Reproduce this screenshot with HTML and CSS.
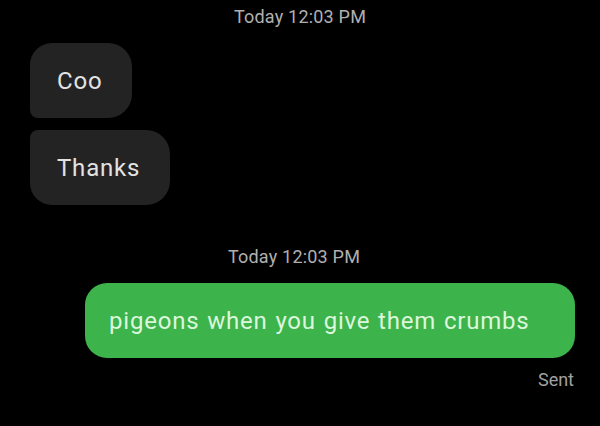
FILE: index.html
```html
<!DOCTYPE html>
<html>
<head>
<meta charset="utf-8">
<link rel="stylesheet" href="styles.css">
</head>
<body>
<div class="chat">
  <div class="time time-top">Today 12:03 PM</div>
  <div class="received">
    <div class="bubble in first">Coo</div>
    <div class="bubble in last">Thanks</div>
  </div>
  <div class="time time-mid">Today 12:03 PM</div>
  <div class="bubble out">pigeons when you give them crumbs</div>
  <div class="status">Sent</div>
</div>
</body>
</html>
```
FILE: styles.css
```css
html, body {
  margin: 0;
  padding: 0;
  background: #000;
  width: 600px;
  height: 426px;
  overflow: hidden;
}
.chat {
  display: flex;
  flex-direction: column;
  font-family: Roboto, "Noto Sans", sans-serif;
}
.time {
  align-self: center;
  color: #b0b0b0;
  font-size: 18px;
  line-height: 22px;
  letter-spacing: 0.2px;
}
.time-top {
  margin-top: 6px;
}
.received {
  display: flex;
  flex-direction: column;
  align-items: flex-start;
  gap: 12px;
  margin: 15px 0 0 30px;
}
.bubble {
  font-size: 24px;
  line-height: 28px;
  letter-spacing: 0.8px;
  word-spacing: 1px;
  display: flex;
  align-items: center;
  box-sizing: border-box;
  height: 75px;
}
.bubble.in {
  background: #232323;
  color: #e2e2e2;
  padding: 0 30px 0 27px;
}
.bubble.first {
  border-radius: 22px 24px 24px 8px;
}
.bubble.last {
  border-radius: 8px 24px 24px 22px;
}
.time-mid {
  margin-top: 41px;
  margin-left: -12px;
}
.bubble.out {
  margin: 15px 25px 0 85px;
  background: #3db34b;
  color: #dcf7dc;
  border-radius: 22px;
  padding: 0 24px;
  height: 75px;
}
.status {
  align-self: flex-end;
  margin: 11px 26px 0 0;
  color: #a0a0a0;
  font-size: 18px;
  line-height: 22px;
}
```
